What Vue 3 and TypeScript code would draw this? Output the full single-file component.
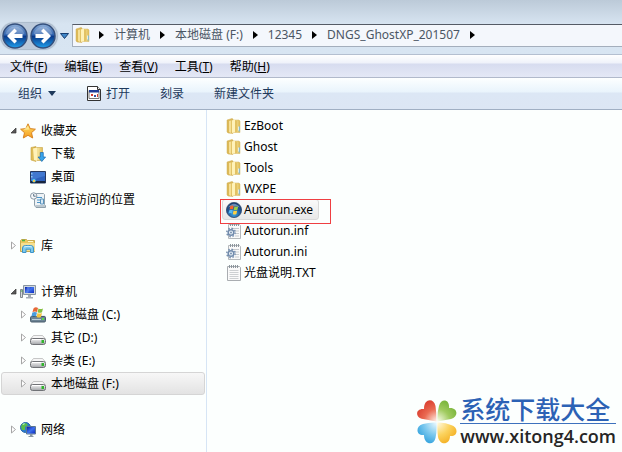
<script setup lang="ts">
import { ref } from 'vue'

interface NavItem { id: string; label: string; icon: string; level: number; toggle: 'open' | 'closed' | 'none' }
interface FileItem { name: string; icon: string }

const crumbs: string[] = ['计算机', '本地磁盘 (F:)', '12345', 'DNGS_GhostXP_201507']
const menus: { label: string; key: string }[] = [
  { label: '文件', key: 'F' },
  { label: '编辑', key: 'E' },
  { label: '查看', key: 'V' },
  { label: '工具', key: 'T' },
  { label: '帮助', key: 'H' },
]
const navGroups: NavItem[][] = [
  [
    { id: 'fav', label: '收藏夹', icon: 'star', level: 0, toggle: 'open' },
    { id: 'down', label: '下载', icon: 'download', level: 1, toggle: 'none' },
    { id: 'desk', label: '桌面', icon: 'desktop', level: 1, toggle: 'none' },
    { id: 'recent', label: '最近访问的位置', icon: 'recent', level: 1, toggle: 'none' },
  ],
  [{ id: 'lib', label: '库', icon: 'library', level: 0, toggle: 'closed' }],
  [
    { id: 'pc', label: '计算机', icon: 'computer', level: 0, toggle: 'open' },
    { id: 'c', label: '本地磁盘 (C:)', icon: 'sysdrive', level: 1, toggle: 'closed' },
    { id: 'd', label: '其它 (D:)', icon: 'drive', level: 1, toggle: 'closed' },
    { id: 'e', label: '杂类 (E:)', icon: 'drive', level: 1, toggle: 'closed' },
    { id: 'f', label: '本地磁盘 (F:)', icon: 'drive', level: 1, toggle: 'closed' },
  ],
  [{ id: 'net', label: '网络', icon: 'network', level: 0, toggle: 'closed' }],
]
const files: FileItem[] = [
  { name: 'EzBoot', icon: 'folder' },
  { name: 'Ghost', icon: 'folder' },
  { name: 'Tools', icon: 'folder' },
  { name: 'WXPE', icon: 'folder' },
  { name: 'Autorun.exe', icon: 'winexe' },
  { name: 'Autorun.inf', icon: 'config' },
  { name: 'Autorun.ini', icon: 'config' },
  { name: '光盘说明.TXT', icon: 'text' },
]
const activeNav = ref('f')
const activeFile = ref('Autorun.exe')
</script>

<template>
  <div class="window">
    <svg class="defs" width="0" height="0" aria-hidden="true">
      <defs>
        <linearGradient id="gFold" x1="0" x2="1" y1="0" y2="0">
          <stop offset="0" stop-color="#d9b650" /><stop offset=".45" stop-color="#f6e49b" /><stop offset="1" stop-color="#dfbd58" />
        </linearGradient>
        <linearGradient id="gOrb" x1="0" x2="0" y1="0" y2="1">
          <stop offset="0" stop-color="#8fb0da" /><stop offset=".45" stop-color="#2f62ae" /><stop offset=".52" stop-color="#0b3a8a" /><stop offset="1" stop-color="#1fa0ee" />
        </linearGradient>
        <linearGradient id="gStar" x1="0" x2="0" y1="0" y2="1">
          <stop offset="0" stop-color="#ffe46a" /><stop offset="1" stop-color="#f59a1c" />
        </linearGradient>
        <linearGradient id="gScreen" x1="0" x2="1" y1="0" y2="1">
          <stop offset="0" stop-color="#0a1fa8" /><stop offset=".5" stop-color="#3f72ee" /><stop offset="1" stop-color="#0b2cc0" />
        </linearGradient>
        <linearGradient id="gDrive" x1="0" x2="0" y1="0" y2="1">
          <stop offset="0" stop-color="#f8f8f8" /><stop offset="1" stop-color="#a2a4a8" />
        </linearGradient>
        <radialGradient id="gWin" cx=".5" cy=".75" r=".7">
          <stop offset="0" stop-color="#3fa8e8" /><stop offset=".6" stop-color="#1f5596" /><stop offset="1" stop-color="#183a6c" />
        </radialGradient>
      </defs>
      <symbol id="i-folder" viewBox="0 0 16 16">
        <path d="M1 2l5-1.500 1 .5v14.500L2 15l-1-1z" fill="#dcb957" stroke="#d2b058" stroke-width=".5" />
        <path d="M4 2h9l1 1v11.500H5z" fill="url(#gFold)" stroke="#d6b761" stroke-width=".5" />
        <path d="M3 3l2-.5v12.500l-2-1z" fill="#f6e096" />
        <path d="M6 2.500l3-1v12.500l-3 1z" fill="#fff2b8" />
        <path d="M9 2l2 1v11l-2 .5z" fill="#e2c263" />
        <path d="M12.500 8.500h1.500v5h-1.500z" fill="#88bccc" />
        <path d="M12.500 8.500v4" stroke="#fff" stroke-width=".7" />
      </symbol>
      <symbol id="i-star" viewBox="0 0 16 16">
        <path d="M8 .8l2.200 4.800 5.200.6-3.900 3.500 1.200 5.300L8 12.300 3.300 15l1.200-5.300L.6 6.200l5.200-.6z" fill="url(#gStar)" stroke="#d88423" />
        <path d="M8 2.800l1.400 3.700-6 .4z" fill="#fff3a8" opacity=".7" />
      </symbol>
      <symbol id="i-download" viewBox="0 0 16 16">
        <path d="M1 1.500L6 .5v15L1 14z" fill="#dfbd58" stroke="#c7a342" stroke-width=".6" />
        <path d="M4 1.500h8.500v13H5z" fill="url(#gFold)" stroke="#c7a342" stroke-width=".6" />
        <path d="M3 2.500l4-1V15l-3-1z" fill="#fff1b7" />
        <path d="M10.300 6.500h3v4.500h2.300l-3.800 4.500L8 11h2.300z" fill="#37a4ea" stroke="#1768b2" stroke-width=".7" />
      </symbol>
      <symbol id="i-desktop" viewBox="0 0 16 16">
        <path d="M.5 2.500h15v11.500H.5z" fill="#2e62bd" stroke="#27395f" />
        <path d="M1 3h14v4Q9 8 1 12z" fill="#4178d0" />
        <path d="M1 12h14v2H1z" fill="#17253e" />
        <circle cx="4" cy="11.800" r="1.800" fill="#55d6f4" /><path d="M3 11h2v2H3z" fill="#eec755" />
        <path d="M1 4h1.500v1.500H1zM1 7h1.500v1.500H1z" fill="#8cc4f1" />
      </symbol>
      <symbol id="i-recent" viewBox="0 0 16 16">
        <path d="M4.500 1.500h9l1 1v10l1 1v2H6l-1.500-2z" fill="#eef3f6" stroke="#8fa0ab" />
        <path d="M7 5.500h5M7 8h3M7 10.500h3" stroke="#4b97c9" />
        <path d="M10.500 7h3v5h-3z" fill="#d9eaf5" stroke="#5a94bd" />
        <circle cx="3.700" cy="4" r="3.200" fill="#f6f8fa" stroke="#8b9aa6" /><path d="M3.700 2v2.200h2" fill="none" stroke="#577083" />
        <path d="M5 13h10v2H6z" fill="#bcc8cf" />
      </symbol>
      <symbol id="i-library" viewBox="0 0 16 16">
        <path d="M.5 2.500l1-1h5l1 1h7v11H.5z" fill="#eac85e" stroke="#c9aa50" />
        <path d="M2 2.500h3" stroke="#4eb343" stroke-width="1.500" /><path d="M1 5h14v8H1z" fill="#f5df91" />
        <path d="M8 3.500h5" stroke="#fff8cd" />
        <path d="M2.500 14.500V10q0-2.500 3-2.500h5q3 0 3 2.500v4.500h-3v-3.300H6v3.300z" fill="#7dc9ed" stroke="#3c94c8" />
        <path d="M4 9q4-1.500 8 0" fill="none" stroke="#d1f2ff" />
      </symbol>
      <symbol id="i-computer" viewBox="0 0 16 16">
        <path d="M.5 5.500h2v8h-2z" fill="#d5d8dc" stroke="#80888f" /><path d="M1 7h1.500" stroke="#35ab36" />
        <path d="M3.500 1.500h12v9h-12z" fill="#cfd7de" stroke="#8795a1" />
        <path d="M5 3h9v6H5z" fill="url(#gScreen)" /><path d="M7 3h3L8 9H6z" fill="#638bef" opacity=".6" />
        <path d="M8 11h3v2h2v1.500H6V13h2z" fill="#a4acb5" />
      </symbol>
      <symbol id="i-drive" viewBox="0 0 16 16">
        <path d="M3.500 5.500h9L15.500 9H.5z" fill="#f6f6f6" stroke="#b0b0b0" stroke-width=".7" />
        <rect x=".5" y="8.500" width="15" height="6" rx="2" fill="url(#gDrive)" stroke="#707276" />
        <path d="M2 9.500h9" stroke="#fff" /><path d="M11.500 10h2.500v3h-2.500z" fill="#30b42c" />
      </symbol>
      <symbol id="i-sysdrive" viewBox="0 0 16 16">
        <path d="M1 8.500h14l1 2H0z" fill="#d7e0e6" />
        <rect x=".5" y="9.500" width="15" height="5.500" rx="1.200" fill="#6c8394" stroke="#465b6a" />
        <path d="M2 12.500h9" stroke="#bacdd8" /><path d="M12 11h2v2h-2z" fill="#55dc48" />
        <path d="M3.500 1.500q2-2 4.500-.5L7 5Q5 4 2.500 5z" fill="#e66838" />
        <path d="M8.500 1.500q2 1.200 4.500 0L12 5.300q-2 1-4.500 0z" fill="#85bf3f" />
        <path d="M2.300 5.500Q5 4.300 7 5.500l-1 4q-2-1-4.500 0z" fill="#499cdd" />
        <path d="M7.500 6q2 1.200 4.500 0l-1 4q-2 1-4.500 0z" fill="#f5c43d" />
      </symbol>
      <symbol id="i-network" viewBox="0 0 16 16">
        <circle cx="5.500" cy="5.500" r="5" fill="#2a7cce" stroke="#2565aa" />
        <path d="M2 2l4-1 2 2-3 2v3H2L1 5zM6 7l3 1-3 2z" fill="#5abd4b" />
        <path d="M2 2l3-1-1 2z" fill="#bbf0d0" />
        <path d="M6.500 4.500h9v7.500h-9z" fill="#b9c9d8" stroke="#5b7690" />
        <path d="M7 5h8v6.500H7z" fill="url(#gScreen)" /><path d="M10 12h2.500v2h1v1H8.500v-1H10z" fill="#8897a3" />
      </symbol>
      <symbol id="i-winexe" viewBox="0 0 16 16">
        <circle cx="8" cy="8" r="7.600" fill="url(#gWin)" stroke="#304a6d" stroke-width=".8" />
        <path d="M2 5.500Q8-2 14 5.500 8 3 2 5.500z" fill="#a8c7e2" opacity=".55" />
        <path d="M4.200 4.300q1.800-1.400 3.500-.3L7 7.300q-1.700-.8-3.500.2z" fill="#f2652d" />
        <path d="M8.500 4.300q1.700 1 3.700 0l-.8 3.400q-1.800 1-3.600 0z" fill="#9dd043" />
        <path d="M3.300 8.300Q5 7.200 6.800 8.200L6 11.500q-1.700-1-3.500 0z" fill="#56b8f1" />
        <path d="M7.600 8.600q1.800 1 3.600 0l-.8 3.400q-1.800 1-3.600 0z" fill="#ffcf42" />
      </symbol>
      <symbol id="i-config" viewBox="0 0 16 16">
        <path d="M2.500 1.500h11l1 1v13h-12z" fill="#fafafa" stroke="#b5b9bc" />
        <path d="M4.500 0v3M6.500 0v3M8.500 0v3M10.500 0v3M12.500 0v3" stroke="#8c969d" />
        <path d="M5 5.500h8M9 8h4M10 10.500h3M9 13h4" stroke="#c7cbce" />
        <circle cx="5" cy="9.500" r="4.200" fill="none" stroke="#7891b0" stroke-width="1.500" stroke-dasharray="1.600 1.700" />
        <circle cx="5" cy="9.500" r="2.800" fill="#e9f1f8" stroke="#718bac" stroke-width="1.500" /><circle cx="5" cy="9.500" r="1" fill="#7891ae" />
      </symbol>
      <symbol id="i-text" viewBox="0 0 16 16">
        <path d="M1.500 1.500h12l1 1v13h-13z" fill="#fafafa" stroke="#a9adb1" />
        <path d="M3.500 0v3M5.500 0v3M7.500 0v3M9.500 0v3M11.500 0v3" stroke="#8c969d" />
        <path d="M3.500 5.500h9M3.500 7.500h9M3.500 9.500h9M3.500 11.500h9M3.500 13.500h9" stroke="#cdd0d2" />
      </symbol>
    </svg>

    <header class="address">
      <nav class="history" aria-label="历史">
        <button class="orb" aria-label="后退">
          <svg viewBox="0 0 26 26" width="26" height="26"><circle cx="13" cy="13" r="12" fill="url(#gOrb)" stroke="#344f7c" stroke-width="1.500" /><path d="M3.500 11a9.800 9.800 0 0 1 19 0Q13 14 3.500 11z" fill="#fff" opacity=".22" /><path d="M12.500 5.500L5 13l7.500 7.500 2.500-2.500-3-3h8.500v-4H12l3-3z" fill="#fff" /></svg>
        </button>
        <button class="orb" aria-label="前进">
          <svg viewBox="0 0 26 26" width="26" height="26"><circle cx="13" cy="13" r="12" fill="url(#gOrb)" stroke="#344f7c" stroke-width="1.500" /><path d="M3.500 11a9.800 9.800 0 0 1 19 0Q13 14 3.500 11z" fill="#fff" opacity=".22" /><path d="M13.500 5.500L21 13l-7.500 7.500L11 18l3-3H5.500v-4H14l-3-3z" fill="#fff" /></svg>
        </button>
      </nav>
      <button class="recent" aria-label="最近的页面">
        <svg viewBox="0 0 9 6" width="9" height="6"><path d="M.5.5h8l-4 5z" fill="#3f86c7" stroke="#173d70" /></svg>
      </button>
      <nav class="crumbs" aria-label="路径">
        <svg class="icon" width="16" height="16"><use href="#i-folder" /></svg>
        <svg class="sep" viewBox="0 0 5 8" width="5" height="8"><path d="M0 0l5 4-5 4z" /></svg>
        <template v-for="c in crumbs" :key="c">
          <a href="#">{{ c }}</a>
          <svg class="sep" viewBox="0 0 5 8" width="5" height="8"><path d="M0 0l5 4-5 4z" /></svg>
        </template>
      </nav>
    </header>

    <nav class="menubar" aria-label="菜单">
      <button v-for="m in menus" :key="m.key">{{ m.label }}(<u>{{ m.key }}</u>)</button>
    </nav>

    <div class="toolbar">
      <button class="organize">组织<svg viewBox="0 0 10 5" width="10" height="5"><path d="M1 0h8L5 5z" fill="#1e395b" /></svg></button>
      <button class="open">
        <svg viewBox="0 0 14 15" width="14" height="15"><path d="M.5.500h10l3 3v11H.5z" fill="#fff" stroke="#333" /><path d="M10.500.500v3h3" fill="#eee" stroke="#333" /><path d="M2 4.500h10v8H2z" fill="#fff" stroke="#777" /><path d="M2 4h10v2.500H2z" fill="#203d99" /><path d="M4 8h2v2H4z" fill="#d43a31" /><path d="M7 9h2v2H7z" fill="#34529e" /><path d="M10 8h1v3h-1z" fill="#d43a31" /></svg>打开
      </button>
      <button>刻录</button>
      <button>新建文件夹</button>
    </div>

    <div class="body">
      <aside class="sidebar">
        <ul v-for="(g, i) in navGroups" :key="i">
          <li v-for="n in g" :key="n.id">
            <button class="nav-row" :class="{ child: n.level === 1, active: n.id === activeNav }" @click="activeNav = n.id">
              <svg class="toggle" viewBox="0 0 7 9" width="7" height="9">
                <path v-if="n.toggle === 'open'" d="M6 2v5H1z" fill="#595959" stroke="#333" stroke-width=".7" />
                <path v-else-if="n.toggle === 'closed'" d="M1.500 1l4 3.500-4 3.500z" fill="#fff" stroke="#a6a6a6" />
              </svg>
              <svg class="icon" width="16" height="16"><use :href="'#i-' + n.icon" /></svg>
              <span>{{ n.label }}</span>
            </button>
          </li>
        </ul>
      </aside>

      <main class="content">
        <ul class="files">
          <li v-for="f in files" :key="f.name" :class="{ marked: f.name === 'Autorun.exe' }">
            <button class="file" :class="{ active: f.name === activeFile }" @click="activeFile = f.name">
              <svg class="icon" width="16" height="16"><use :href="'#i-' + f.icon" /></svg>
              <span>{{ f.name }}</span>
            </button>
          </li>
        </ul>
        <footer class="brand">
          <svg class="flower" viewBox="0 0 42 46" width="42" height="46" aria-hidden="true">
            <defs>
              <radialGradient id="pr" gradientUnits="userSpaceOnUse" cx="21" cy="23" r="22"><stop offset=".1" stop-color="#fde3d8" /><stop offset=".6" stop-color="#ea6a52" /><stop offset="1" stop-color="#dc4434" /></radialGradient>
              <radialGradient id="pg" gradientUnits="userSpaceOnUse" cx="21" cy="23" r="22"><stop offset=".1" stop-color="#f2f8df" /><stop offset=".6" stop-color="#a0cb5f" /><stop offset="1" stop-color="#7cb63e" /></radialGradient>
              <radialGradient id="pb" gradientUnits="userSpaceOnUse" cx="21" cy="23" r="22"><stop offset=".1" stop-color="#e0f4fc" /><stop offset=".6" stop-color="#7cc9ee" /><stop offset="1" stop-color="#3ba7e0" /></radialGradient>
              <radialGradient id="py" gradientUnits="userSpaceOnUse" cx="21" cy="23" r="22"><stop offset=".1" stop-color="#fff6d4" /><stop offset=".6" stop-color="#fbd35e" /><stop offset="1" stop-color="#f5b52c" /></radialGradient>
            </defs>
            <path d="M20.500 22.500Q14 21 7 20C-1 19-1 9 8 10 8-1 18-1 19.500 7Q20.500 14 20.500 22.500z" fill="url(#pr)" />
            <path d="M21.500 22.500Q21 14 23 7C25-1 34 0 33 9 42 8 43 18 35 20Q28 21 21.500 22.500z" fill="url(#pg)" />
            <path d="M20.500 23.500Q14 23 7 25C-1 27 0 37 8 36 8 46 18 47 19.500 39Q21 32 20.500 23.500z" fill="url(#pb)" />
            <path d="M21.500 23.500Q29 23 35 26C43 28 42 38 34 37 34 46 24 47 22 38Q21 31 21.500 23.500z" fill="url(#py)" />
          </svg>
          <div class="brand-text">
            <strong>系统下载大全</strong>
            <a href="#">www.xitong4.com</a>
          </div>
        </footer>
      </main>
    </div>
  </div>
</template>

<style>
body { margin: 0; }
</style>

<style scoped>
.window {
  display: flex;
  flex-direction: column;
  min-height: 100vh;
  background: #fcfffe;
  color: #000;
  font: 12px/20px "Noto Sans", "Noto Sans CJK SC", sans-serif;
}
.defs { position: absolute; }
button { margin: 0; padding: 0; border: 0; background: none; font: inherit; color: inherit; white-space: nowrap; }
a { color: inherit; text-decoration: none; }
ul { margin: 0; padding: 0; list-style: none; }
svg { flex: none; display: block; }
.icon { width: 16px; height: 16px; }
.address {
  display: flex;
  align-items: center;
  height: 30px;
  padding: 23px 0 1px;
  background: linear-gradient(#bccad8, #d7e4f1 24px, #d8e5f2);
}
.history {
  display: flex;
  gap: 2px;
  margin: 0 3px 4px 1px;
  padding: 0 1px;
  border-radius: 14px;
  background: #bccadb;
  box-shadow: 0 0 1px 1px #a9b8c9;
}
.orb { width: 26px; height: 26px; }
.recent { display: flex; align-items: center; height: 22px; margin: 0 3px 4px 0; }
.crumbs {
  display: flex;
  flex: 1;
  align-items: center;
  gap: 10px;
  height: 21px;
  margin-bottom: 6px;
  padding-left: 2px;
  border: 1px solid #a4aebc;
  border-top-color: #555b66;
  border-right: 0;
  background: #f4f7fc;
  color: #4b5664;
  white-space: nowrap;
}
.crumbs .icon { margin-right: -2px; }
.menubar {
  display: flex;
  gap: 17px;
  height: 20px;
  padding: 2px 10px 0;
  border-top: 1px solid #b4bfd0;
  border-bottom: 1px solid #b1b9cb;
  background: linear-gradient(#fff, #eff2fa 8px, #d7dcef 9px, #e4e8f6);
}
.menubar u { text-underline-offset: 1px; }
.toolbar {
  display: flex;
  align-items: center;
  gap: 30px;
  height: 31px;
  padding: 0 18px;
  border-bottom: 1px solid #a0afc3;
  background: linear-gradient(#fdffff, #e9f4fc 14px, #dce7f5 15px, #dce6f4);
  color: #1e395b;
}
.toolbar button { display: flex; align-items: center; gap: 5px; }
.body { display: flex; flex: 1; }
.sidebar {
  flex: none;
  box-sizing: border-box;
  width: 207px;
  padding: 9px 1px 0;
  border-right: 1px solid #d6e5f5;
}
.sidebar ul + ul { margin-top: 23px; }
.nav-row {
  display: flex;
  align-items: center;
  gap: 4px;
  box-sizing: border-box;
  width: 100%;
  height: 23px;
  padding-left: 8px;
  border: 1px solid transparent;
  border-radius: 3px;
}
.nav-row.child { padding-left: 18px; }
.nav-row .icon { margin: 0 1px 0 -1px; }
.nav-row.active { border-color: #d5d5d5; background: linear-gradient(#f7f7f7, #e3e3e3); }
.content { display: flex; flex: 1; flex-direction: column; justify-content: space-between; }
.files { padding: 5px 0 0 15px; }
.files li { display: flex; height: 21px; }
.file {
  display: flex;
  align-items: center;
  gap: 2px;
  box-sizing: border-box;
  height: 21px;
  padding: 0 5px 0 3px;
  border: 1px solid transparent;
  border-radius: 3px;
}
.file.active { border-color: #d9d9d9; background: linear-gradient(#fafafa, #e8e8e8); }
.marked { position: relative; }
.marked::after {
  content: "";
  position: absolute;
  top: 0;
  left: -2px;
  box-sizing: border-box;
  width: 111px;
  height: 25px;
  border: 1px solid #ef3f42;
  pointer-events: none;
}
.brand { display: flex; align-items: center; align-self: flex-end; gap: 2px; padding: 0 6px 4px 0; }
.brand-text { display: flex; flex-direction: column; }
.brand-text strong { border-bottom: 1px solid #3d71bd; color: #2c62b5; font-size: 25px; line-height: 28px; font-weight: 500; }
.brand-text a { color: #252525; font-family: "Open Sans", "Noto Sans", sans-serif; font-size: 18px; line-height: 24px; font-weight: 600; }
</style>
